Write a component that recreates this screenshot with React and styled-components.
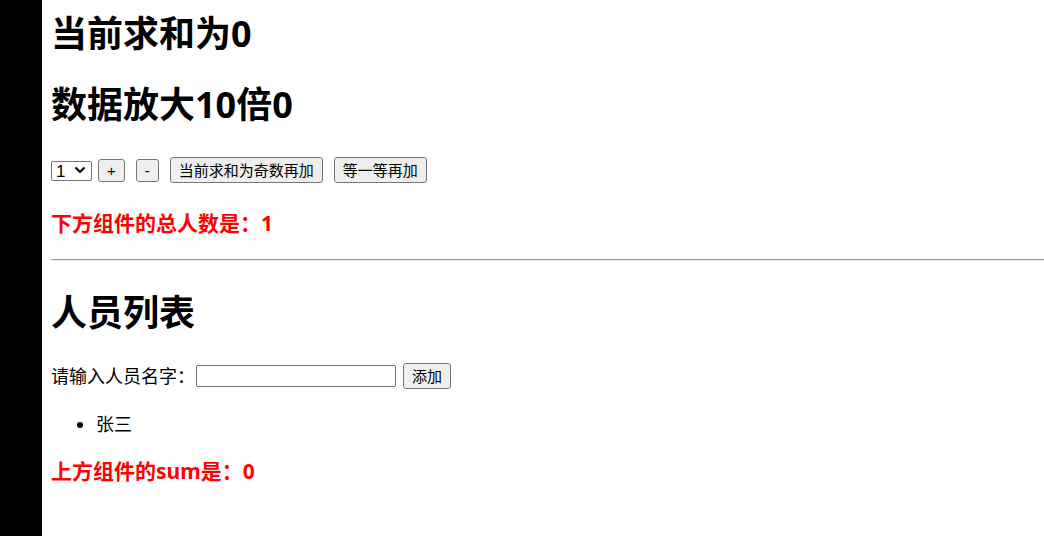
import React, { useState } from "react";
import styled, { createGlobalStyle } from "styled-components";

const GlobalStyle = createGlobalStyle`
  html, body {
    margin: 0;
    padding: 0;
    background: #fff;
  }
  body {
    font-family: "Noto Sans", "Noto Sans CJK SC", sans-serif;
    color: #000;
    overflow: hidden;
  }
`;

const App = () => {
  const [step, setStep] = useState(1);
  const [sum, setSum] = useState(0);
  const [name, setName] = useState("");
  const [persons, setPersons] = useState([{ id: 1, name: "张三" }]);

  const addPerson = () => {
    if (!name.trim()) return;
    setPersons([...persons, { id: Date.now(), name: name.trim() }]);
    setName("");
  };

  return (
    <>
      <GlobalStyle />
      <Page>
        <SideBar />
        <Main>
          <Title $top={10}>当前求和为{sum}</Title>
          <Title $top={23}>数据放大10倍{sum * 10}</Title>
          <Controls>
            <SelectWrap>
              <Select value={step} onChange={(e) => setStep(Number(e.target.value))}>
                <option value={1}>1</option>
                <option value={2}>2</option>
                <option value={3}>3</option>
              </Select>
              <Chevron width="12" height="8" viewBox="0 0 12 8">
                <path d="M1.5 1.5 L6 6 L10.5 1.5" fill="none" stroke="#000" strokeWidth="2.2" />
              </Chevron>
            </SelectWrap>
            <Button $gap={6} $h={23} onClick={() => setSum(sum + step)}>+</Button>
            <Button $gap={11} $h={23} onClick={() => setSum(sum - step)}>-</Button>
            <Button $gap={11} onClick={() => sum % 2 !== 0 && setSum(sum + step)}>
              当前求和为奇数再加
            </Button>
            <Button $gap={11} onClick={() => setTimeout(() => setSum((s) => s + step), 500)}>
              等一等再加
            </Button>
          </Controls>
          <Notice $top={26}>下方组件的总人数是：{persons.length}</Notice>
          <Divider />
          <Title $top={28}>人员列表</Title>
          <InputRow>
            <Label>请输入人员名字：</Label>
            <NameInput value={name} onChange={(e) => setName(e.target.value)} />
            <Button $gap={7} onClick={addPerson}>添加</Button>
          </InputRow>
          <List>
            {persons.map((p) => (
              <Item key={p.id}>{p.name}</Item>
            ))}
          </List>
          <Notice $top={21}>上方组件的sum是：{sum}</Notice>
        </Main>
      </Page>
    </>
  );
};

export default App;

// Styled Components
const Page = styled.div`
  display: flex;
  min-height: 536px;
`;

const SideBar = styled.div`
  width: 42px;
  flex-shrink: 0;
  background: #000;
`;

const Main = styled.div`
  flex: 1;
  padding-left: 9px;
  display: flex;
  flex-direction: column;
`;

const Title = styled.h1`
  margin: ${(p) => p.$top}px 0 0;
  font-size: 36px;
  line-height: 48px;
  font-weight: 700;
`;

const Controls = styled.div`
  display: flex;
  align-items: center;
  height: 26px;
  margin-top: 28px;
`;

const SelectWrap = styled.div`
  position: relative;
  width: 41px;
  height: 20px;
`;

const Select = styled.select`
  appearance: none;
  width: 100%;
  height: 100%;
  box-sizing: border-box;
  border: 1px solid #767676;
  border-radius: 2px;
  background: #fff;
  padding: 0 0 0 4px;
  font-family: "Liberation Sans", sans-serif;
  font-size: 17px;
  color: #000;
  outline: none;
`;

const Chevron = styled.svg`
  position: absolute;
  right: 6px;
  top: 6px;
  pointer-events: none;
`;

const Button = styled.button`
  margin-left: ${(p) => p.$gap || 0}px;
  height: ${(p) => p.$h || 26}px;
  box-sizing: border-box;
  padding: 0 8px;
  border: 1px solid #767676;
  border-radius: 3px;
  background: #efefef;
  color: #000;
  font-family: "Liberation Sans", "Noto Sans CJK SC", sans-serif;
  font-size: 15px;
  line-height: 1;
  cursor: pointer;

  &:hover {
    background: #e5e5e5;
  }
`;

const Notice = styled.h3`
  margin: ${(p) => p.$top}px 0 0;
  color: #f00;
  font-size: 21px;
  line-height: 28px;
  font-weight: 700;
`;

const Divider = styled.hr`
  margin: 22px 0 0;
  height: 0;
  border: none;
  border-top: 1px solid #9a9a9a;
  border-bottom: 1px solid #eeeeee;
`;

const InputRow = styled.div`
  display: flex;
  align-items: center;
  height: 26px;
  margin-top: 26px;
`;

const Label = styled.span`
  font-size: 18px;
  line-height: 24px;
`;

const NameInput = styled.input`
  margin-left: 1px;
  width: 200px;
  height: 22px;
  box-sizing: border-box;
  border: 1px solid #767676;
  border-radius: 2px;
  padding: 0 3px;
  font-size: 15px;
  outline: none;
`;

const List = styled.ul`
  margin: 23px 0 0;
  padding-left: 45px;
`;

const Item = styled.li`
  font-size: 18px;
  line-height: 24px;
`;
